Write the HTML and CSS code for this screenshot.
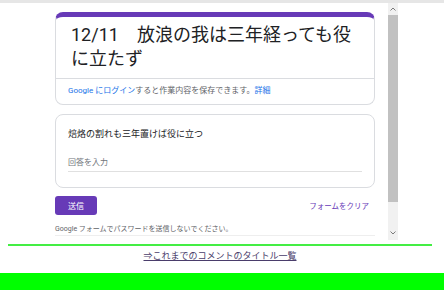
FILE: index.html
```html
<!DOCTYPE html>
<html lang="ja">
<head>
    <meta charset="UTF-8">
    <meta name="viewport" content="width=device-width, initial-scale=1.0">
    <title>12/11 放浪の我は三年経っても役に立たず</title>
    <link rel="stylesheet" href="styles.css">
</head>
<body>
    <div class="top-strip"></div>

    <div class="form-frame">
        <div class="form-view">
            <div class="card title-card">
                <h1 class="form-title">12/11　放浪の我は三年経っても役に立たず</h1>
                <div class="login-note">
                    <a href="#">Google にログイン</a>すると作業内容を保存できます。<a href="#">詳細</a>
                </div>
            </div>

            <div class="card question-card">
                <div class="question">焙烙の割れも三年置けば役に立つ</div>
                <div class="answer">回答を入力</div>
            </div>

            <div class="actions">
                <button class="submit">送信</button>
                <a href="#" class="clear">フォームをクリア</a>
            </div>

            <p class="warning">Google フォームでパスワードを送信しないでください。</p>
        </div>

        <div class="scrollbar">
            <div class="arrow arrow-up">
                <svg width="6" height="4" viewBox="0 0 6 4"><path d="M0.5 3.5 L3 1 L5.5 3.5" fill="none" stroke="#7a7a7a" stroke-width="1"/></svg>
            </div>
            <div class="thumb"></div>
            <div class="track"></div>
            <div class="arrow arrow-down">
                <svg width="6" height="4" viewBox="0 0 6 4"><path d="M0.5 0.5 L3 3 L5.5 0.5" fill="none" stroke="#7a7a7a" stroke-width="1"/></svg>
            </div>
        </div>
    </div>

    <div class="green-line"></div>

    <p class="title-list"><a href="#">⇒これまでのコメントのタイトル一覧</a></p>

    <div class="green-bar"></div>
</body>
</html>
```

FILE: styles.css
```css
body {
    margin: 0;
    background: white;
    font-family: Roboto, "Noto Sans CJK JP", sans-serif;
}

.top-strip {
    height: 3px;
    background-color: #e6e6e6;
}

.form-frame {
    display: flex;
    width: 390px;
    height: 237px;
    margin-left: 8px;
    overflow: hidden;
}

.form-view {
    flex: 1;
    padding: 9px 0 0 47px;
}

.card {
    width: 320px;
    box-sizing: border-box;
    background: white;
    border: 1px solid #dadce0;
    border-radius: 8px;
}

.title-card {
    border-top: 5px solid #673ab7;
}

.form-title {
    margin: 0;
    padding: 6px 15px 7px;
    font-size: 18px;
    font-weight: normal;
    line-height: 24px;
    color: #202124;
}

.login-note {
    border-top: 1px solid #dadce0;
    padding: 6px 12px 7px;
    font-size: 8px;
    line-height: 12px;
    color: #5f6368;
}

.login-note a {
    color: #1a73e8;
    text-decoration: none;
}

.question-card {
    margin-top: 9px;
    padding: 13px 12px 15px;
}

.question {
    font-size: 9px;
    line-height: 13px;
    color: #202124;
}

.answer {
    margin-top: 16px;
    padding-bottom: 2px;
    border-bottom: 1px solid #e0e0e0;
    font-size: 8px;
    line-height: 12px;
    color: #70757a;
}

.actions {
    display: flex;
    align-items: center;
    justify-content: space-between;
    width: 320px;
    margin-top: 8px;
}

.submit {
    width: 42px;
    height: 19px;
    padding: 0;
    border: none;
    border-radius: 3px;
    background-color: #673ab7;
    color: white;
    font-family: inherit;
    font-size: 8px;
}

.clear {
    margin-right: 6px;
    font-size: 7.5px;
    color: #673ab7;
    text-decoration: none;
}

.warning {
    width: 320px;
    margin: 9px 0 0;
    padding-bottom: 1px;
    border-bottom: 1px solid #eeeeee;
    font-size: 7px;
    line-height: 10px;
    color: #5f6368;
}

.scrollbar {
    display: flex;
    flex-direction: column;
    width: 10px;
    background-color: #f1f1f1;
}

.arrow {
    display: flex;
    align-items: center;
    justify-content: center;
}

.arrow-up {
    height: 12px;
}

.arrow-down {
    height: 14px;
}

.thumb {
    height: 187px;
    background-color: #c1c1c1;
}

.track {
    flex: 1;
}

.green-line {
    height: 2px;
    margin: 4px 12px 0 8px;
    background-color: #44ee44;
}

.title-list {
    margin: 4px 12px 0 8px;
    text-align: center;
    font-family: "Noto Sans CJK JP", sans-serif;
    font-size: 9px;
    line-height: 12px;
}

.title-list a {
    color: #4a3d6b;
}

.green-bar {
    height: 17px;
    margin-top: 11px;
    background-color: #00ff00;
}
```
